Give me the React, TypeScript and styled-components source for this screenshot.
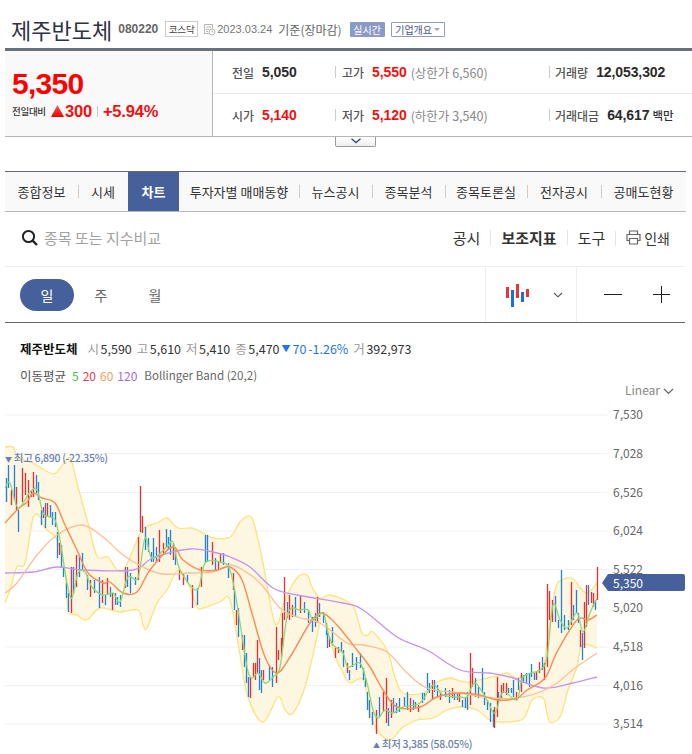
import React from 'react'
import styled, { createGlobalStyle } from 'styled-components'

const KR = `'Noto Sans CJK KR', 'Liberation Sans', sans-serif`
const NUM = `'Liberation Sans', 'Noto Sans CJK KR', sans-serif`
const NAVY = '#45609a'

const GlobalStyle = createGlobalStyle`
  html, body { margin: 0; padding: 0; background: #fff; overflow: hidden; }
  body { font-family: ${KR}; color: #333; }
`

type Pt = [number, number]

const upper: Pt[] = [[5,447],[13,447],[18,457],[33,463],[50,473],[57,472],[68,458],[72,463],[78,487],[88,523],[97,556],[108,557],[117,570],[125,568],[138,538],[145,527],[157,523],[167,518],[178,528],[192,528],[203,533],[213,538],[230,537],[240,522],[250,516],[255,527],[263,563],[273,617],[278,623],[285,600],[297,578],[307,575],[312,587],[320,598],[330,595],[348,602],[355,610],[362,633],[368,635],[373,632],[387,650],[395,677],[403,693],[423,693],[437,682],[450,678],[460,681],[470,682],[487,678],[497,676],[507,673],[517,678],[530,673],[543,667],[547,643],[555,590],[562,580],[573,579],[582,590],[588,593],[597,583]]
const lower: Pt[] = [[5,603],[10,590],[17,567],[25,563],[33,518],[40,517],[45,528],[57,540],[65,573],[68,610],[77,615],[87,620],[100,608],[120,612],[138,610],[143,625],[147,628],[157,603],[167,590],[178,570],[188,583],[197,607],[203,608],[220,602],[230,600],[240,655],[248,697],[263,722],[278,697],[285,710],[293,713],[305,687],[317,637],[323,613],[333,650],[343,673],[350,683],[363,680],[370,713],[377,730],[390,740],[403,727],[417,720],[433,718],[447,710],[460,707],[477,710],[490,720],[503,722],[523,719],[532,700],[543,698],[547,713],[550,722],[560,717],[568,690],[577,667],[582,645],[597,648]]
const ma5: Pt[] = [[5,488],[10,483],[18,508],[30,492],[37,490],[43,513],[50,517],[55,520],[60,540],[67,583],[72,598],[78,573],[85,572],[92,587],[103,595],[113,593],[120,602],[128,577],[138,578],[145,538],[152,558],[167,547],[173,542],[180,570],[197,590],[205,563],[220,562],[230,570],[238,610],[247,667],[252,678],[258,673],[265,683],[273,677],[280,667],[288,613],[300,610],[308,610],[313,620],[323,613],[328,633],[333,645],[343,653],[348,667],[360,663],[367,683],[373,710],[378,718],[385,710],[393,713],[403,707],[420,703],[433,685],[443,695],[460,697],[467,697],[475,683],[487,700],[495,713],[503,692],[517,700],[523,677],[540,670],[547,657],[553,605],[560,620],[567,628],[577,613],[583,632],[590,613],[597,598]]
const ma20: Pt[] = [[5,523],[17,510],[27,502],[33,493],[42,498],[55,503],[65,525],[77,550],[88,573],[103,583],[110,582],[123,593],[137,592],[150,570],[172,547],[183,560],[200,570],[217,570],[230,567],[242,580],[253,617],[265,657],[277,673],[290,657],[310,623],[322,613],[337,625],[357,650],[370,667],[383,690],[397,707],[420,707],[437,697],[460,693],[480,695],[497,700],[517,698],[527,690],[545,678],[557,652],[577,620],[588,620],[597,615]]
const ma60: Pt[] = [[5,593],[17,583],[37,555],[57,535],[82,525],[103,537],[123,555],[143,567],[163,574],[190,573],[213,572],[230,565],[243,570],[260,583],[280,608],[297,617],[320,623],[347,643],[363,645],[387,652],[407,673],[427,688],[460,693],[493,698],[517,698],[540,692],[557,683],[575,668],[597,653]]
const ma120: Pt[] = [[5,573],[33,572],[57,567],[83,570],[133,570],[153,558],[190,549],[217,553],[230,557],[250,567],[273,588],[297,595],[343,603],[363,610],[397,637],[427,650],[460,670],[490,673],[510,677],[543,688],[573,683],[597,677]]

// x, 고가 y, 저가 y
const redCandles: [number, number, number][] = [[11,490,505],[16,487,510],[22,468,502],[25,473,495],[28,480,507],[33,472,497],[43,507,518],[47,503,517],[59,543,555],[71,567,613],[76,555,587],[90,580,597],[102,580,603],[107,578,595],[112,593,610],[125,567,588],[138,537,580],[140,486,532],[142,516,533],[159,530,562],[163,543,553],[173,543,560],[179,570,580],[183,573,585],[192,585,608],[201,567,587],[212,542,565],[218,562,570],[220,553,563],[233,573,590],[236,610,625],[242,635,650],[250,677,698],[253,663,677],[255,663,680],[257,640,673],[263,670,680],[276,627,683],[278,650,660],[281,638,657],[282,613,647],[284,577,620],[289,595,620],[292,605,617],[300,596,613],[317,597,623],[329,637,647],[335,648,658],[338,647,653],[347,663,673],[376,710,734],[383,692,712],[386,678,723],[391,700,718],[410,698,712],[418,705,712],[432,680,700],[440,692,700],[452,688,698],[459,693,702],[470,653,705],[472,668,687],[494,707,728],[497,677,717],[501,685,698],[503,683,693],[506,683,695],[516,692,700],[521,673,692],[536,672,680],[539,662,673],[544,663,680],[547,584,667],[549,591,620],[552,600,622],[571,582,625],[580,630,647],[584,602,648],[586,585,627],[591,592,603],[593,593,607],[597,567,600]]
const blueCandles: [number, number, number][] = [[6,478,502],[8,465,488],[14,465,500],[18,510,532],[31,490,497],[36,475,493],[38,482,500],[41,510,525],[45,503,528],[50,505,518],[52,512,525],[55,512,527],[57,532,558],[61,545,568],[63,568,577],[66,583,598],[68,593,612],[73,567,593],[79,555,577],[82,553,570],[87,575,590],[94,580,593],[99,577,608],[105,595,605],[110,587,597],[115,593,605],[117,597,605],[120,595,607],[127,567,587],[130,573,593],[135,577,585],[145,527,550],[148,538,552],[151,552,562],[153,538,562],[156,547,563],[166,529,548],[168,537,550],[170,530,555],[175,550,565],[187,575,583],[197,588,605],[205,535,563],[207,535,562],[215,558,572],[223,553,565],[228,563,578],[234,590,610],[238,608,637],[244,635,667],[246,653,683],[248,677,697],[259,658,690],[261,670,693],[269,665,680],[272,667,687],[287,602,618],[295,597,617],[304,602,613],[308,610,623],[312,617,632],[315,613,627],[319,603,617],[323,612,623],[326,623,635],[327,633,648],[332,627,643],[341,642,652],[343,650,667],[349,670,680],[352,653,667],[356,657,670],[360,653,668],[363,668,680],[365,678,687],[367,692,710],[369,700,718],[372,712,725],[379,697,717],[388,708,726],[393,698,713],[396,703,713],[399,698,712],[404,697,707],[407,692,710],[413,700,710],[415,702,707],[422,693,703],[424,693,700],[427,673,690],[429,683,693],[434,680,692],[437,685,697],[445,688,697],[449,690,703],[454,692,700],[457,692,700],[462,700,707],[465,697,708],[467,692,710],[475,678,697],[478,687,698],[482,668,693],[484,692,705],[487,700,710],[490,703,722],[493,710,727],[498,692,702],[508,688,693],[511,688,693],[513,680,697],[518,678,690],[523,675,683],[526,673,683],[529,673,687],[531,664,677],[534,673,680],[542,657,670],[555,596,622],[558,620,628],[561,570,633],[564,615,630],[568,620,630],[573,605,620],[576,590,613],[578,613,623],[582,633,660],[588,585,605],[595,600,610]]

const gridYs = [415, 453.5, 492.5, 531, 569.5, 608, 647, 685.5, 724]
const axisLabels = ['7,530', '7,028', '6,526', '6,024', '5,522', '5,020', '4,518', '4,016', '3,514']

// 점 사이를 부드럽게 잇는다
const smooth = (pts: Pt[]): string => {
  let d = `M${pts[0][0]} ${pts[0][1]}`
  for (let i = 0; i < pts.length - 1; i++) {
    const p0 = pts[Math.max(i - 1, 0)]
    const p1 = pts[i]
    const p2 = pts[i + 1]
    const p3 = pts[Math.min(i + 2, pts.length - 1)]
    const c1x = p1[0] + (p2[0] - p0[0]) / 6
    const c1y = p1[1] + (p2[1] - p0[1]) / 6
    const c2x = p2[0] - (p3[0] - p1[0]) / 6
    const c2y = p2[1] - (p3[1] - p1[1]) / 6
    d += `C${c1x.toFixed(1)} ${c1y.toFixed(1)} ${c2x.toFixed(1)} ${c2y.toFixed(1)} ${p2[0]} ${p2[1]}`
  }
  return d
}

const bandArea = (): string => {
  const back = smooth([...lower].reverse()).replace(/^M/, 'L')
  return `${smooth(upper)}${back}Z`
}

const tabs = [
  { label: '종합정보', w: 73 },
  { label: '시세', w: 50, sep: true },
  { label: '차트', w: 51, active: true },
  { label: '투자자별 매매동향', w: 120 },
  { label: '뉴스공시', w: 73, sep: true },
  { label: '종목분석', w: 73, sep: true },
  { label: '종목토론실', w: 82, sep: true },
  { label: '전자공시', w: 74, sep: true },
  { label: '공매도현황', w: 85, sep: true },
]

function App(): JSX.Element {
  return (
    <Page>
      <GlobalStyle />
      <TitleRow>
        <Title>제주반도체</Title>
        <Code>080220</Code>
        <MarketBadge>코스닥</MarketBadge>
        <DateIcon viewBox="0 0 13 13">
          <path d="M1.5 1.5h8v4M1.5 1.5v9h4M3 4h5M3 6.5h3M3 8.5h2" fill="none" stroke="#b5b5b5" />
          <circle cx="9" cy="9" r="3" fill="none" stroke="#b5b5b5" />
          <path d="M9 7.5V9h1.5" fill="none" stroke="#b5b5b5" />
        </DateIcon>
        <DateText>2023.03.24</DateText>
        <BaseText>기준(장마감)</BaseText>
        <RealtimeBadge>실시간</RealtimeBadge>
        <CompanyBadge>
          기업개요
          <Caret />
        </CompanyBadge>
      </TitleRow>

      <Summary>
        <PricePanel>
          <BigPrice>5,350</BigPrice>
          <ChangeRow>
            <ChangeLabel>전일대비</ChangeLabel>
            <UpTriangle />
            <ChangeValue>300</ChangeValue>
            <ChangeSep />
            <ChangeValue>+5.94%</ChangeValue>
          </ChangeRow>
        </PricePanel>
        <StatGrid>
          <StatCell>
            <StatLabel>전일</StatLabel>
            <StatValue>5,050</StatValue>
          </StatCell>
          <StatCell $sep>
            <StatLabel>고가</StatLabel>
            <StatValue $red>5,550</StatValue>
            <StatLimit>(상한가 6,560)</StatLimit>
          </StatCell>
          <StatCell $sep $last>
            <StatLabel>거래량</StatLabel>
            <StatValue>12,053,302</StatValue>
          </StatCell>
          <StatCell $bottom>
            <StatLabel>시가</StatLabel>
            <StatValue $red>5,140</StatValue>
          </StatCell>
          <StatCell $sep $bottom>
            <StatLabel>저가</StatLabel>
            <StatValue $red>5,120</StatValue>
            <StatLimit>(하한가 3,540)</StatLimit>
          </StatCell>
          <StatCell $sep $bottom $last>
            <StatLabel>거래대금</StatLabel>
            <StatValue>64,617</StatValue>
            <StatUnit>백만</StatUnit>
          </StatCell>
        </StatGrid>
      </Summary>

      <CollapseRow>
        <CollapseButton>
          <svg width="12" height="6" viewBox="0 0 12 6">
            <path d="M1.5 .8L6 4.6 10.5 .8" fill="none" stroke="#3f4a66" strokeWidth="1.4" />
          </svg>
        </CollapseButton>
      </CollapseRow>

      <TabBar>
        {tabs.map((tab) => (
          <Tab key={tab.label} $w={tab.w} $active={tab.active} $sep={tab.sep}>
            {tab.label}
          </Tab>
        ))}
      </TabBar>

      <SearchRow>
        <SearchBox>
          <svg width="18" height="18" viewBox="0 0 18 18">
            <circle cx="7.5" cy="7.5" r="5.6" fill="none" stroke="#222" strokeWidth="2" />
            <path d="M11.6 11.6L16 16" stroke="#222" strokeWidth="2.4" />
          </svg>
          <Placeholder>종목 또는 지수비교</Placeholder>
        </SearchBox>
        <ToolMenu>
          <ToolItem>공시</ToolItem>
          <ToolItem $sep $bold>보조지표</ToolItem>
          <ToolItem $sep>도구</ToolItem>
          <ToolItem $sep $small>
            <svg width="15" height="15" viewBox="0 0 15 15">
              <path d="M3.5 4.5V1h8v3.5M3.5 10.5H1V4.5h13v6h-2.5M3.5 8.5h8V14h-8z" fill="none" stroke="#666" strokeWidth="1.2" />
            </svg>
            인쇄
          </ToolItem>
        </ToolMenu>
      </SearchRow>

      <PeriodRow>
        <PeriodGroup>
          <PeriodPill>일</PeriodPill>
          <PeriodItem>주</PeriodItem>
          <PeriodItem>월</PeriodItem>
        </PeriodGroup>
        <ChartTypeCell>
          <svg width="24" height="24" viewBox="0 0 24 24">
            <rect x="0" y="4" width="3" height="11" fill="#ee3338" />
            <rect x="5" y="7" width="3" height="17" fill="#1573e0" />
            <rect x="10" y="1" width="3" height="14" fill="#ee3338" />
            <rect x="15" y="9" width="3" height="10" fill="#1573e0" />
            <rect x="20" y="6" width="3" height="8" fill="#ee3338" />
          </svg>
          <svg width="10" height="6" viewBox="0 0 10 6">
            <path d="M1 1l4 3.8L9 1" fill="none" stroke="#555" strokeWidth="1.1" />
          </svg>
        </ChartTypeCell>
        <ZoomCell>
          <svg width="18" height="2" viewBox="0 0 18 2">
            <rect width="18" height="1" fill="#222" />
          </svg>
          <svg width="17" height="17" viewBox="0 0 17 17">
            <path d="M0 8.5h17M8.5 0v17" stroke="#222" strokeWidth="1" />
          </svg>
        </ZoomCell>
      </PeriodRow>

      <QuoteRow>
        <QuoteName>제주반도체</QuoteName>
        <QuoteKey $first>시</QuoteKey>
        <QuoteVal>5,590</QuoteVal>
        <QuoteKey>고</QuoteKey>
        <QuoteVal>5,610</QuoteVal>
        <QuoteKey>저</QuoteKey>
        <QuoteVal>5,410</QuoteVal>
        <QuoteKey>종</QuoteKey>
        <QuoteVal>5,470</QuoteVal>
        <QuoteDown>▼</QuoteDown>
        <QuoteDelta>70 -1.26%</QuoteDelta>
        <QuoteKey>거</QuoteKey>
        <QuoteVal>392,973</QuoteVal>
      </QuoteRow>

      <LegendRow>
        <LegendName>이동평균</LegendName>
        <LegendNum $c="#3bc43b">5</LegendNum>
        <LegendNum $c="#f5374a">20</LegendNum>
        <LegendNum $c="#f79a5c">60</LegendNum>
        <LegendNum $c="#a667f0">120</LegendNum>
        <LegendBand>Bollinger Band (20,2)</LegendBand>
      </LegendRow>

      <ChartBox viewBox="0 380 692 374" width="692" height="374">
        <ScaleText x="625" y="395">Linear</ScaleText>
        <path d="M664 389l4.5 4.5 4.5-4.5" fill="none" stroke="#666" strokeWidth="1.2" />

        {gridYs.map((y) => (
          <line key={y} x1="5" x2="607" y1={y} y2={y} stroke="#f1f1f1" />
        ))}
        {axisLabels.map((label, i) => (
          <AxisText key={label} x="613" y={gridYs[i] + 4}>{label}</AxisText>
        ))}

        <path d={bandArea()} fill="#fdf6e1" />
        <path d={smooth(upper)} fill="none" stroke="#ffe27a" strokeWidth="1.3" />
        <path d={smooth(lower)} fill="none" stroke="#ffe27a" strokeWidth="1.3" />

        {blueCandles.map(([x, y1, y2]) => (
          <line key={`b${x}`} x1={x + 0.5} x2={x + 0.5} y1={y1} y2={y2} stroke="#1e80e2" strokeWidth="1.3" />
        ))}
        {redCandles.map(([x, y1, y2]) => (
          <line key={`r${x}`} x1={x + 0.5} x2={x + 0.5} y1={y1} y2={y2} stroke="#f42a2a" strokeWidth="1.3" />
        ))}

        <path d={smooth(ma120)} fill="none" stroke="#c394f2" strokeWidth="1.3" />
        <path d={smooth(ma60)} fill="none" stroke="#ffbe93" strokeWidth="1.3" />
        <path d={smooth(ma20)} fill="none" stroke="#ff8a52" strokeWidth="1.4" />
        <path d={smooth(ma5)} fill="none" stroke="#84db78" strokeWidth="1.3" />

        <MarkText x="5" y="462"><MarkArrow>▼</MarkArrow> 최고 6,890 (-22.35%)</MarkText>
        <MarkText x="373" y="748"><MarkArrow>▲</MarkArrow> 최저 3,385 (58.05%)</MarkText>

        <path d="M602 583l6-9h75q2 0 2 2v13q0 2-2 2h-75z" fill={NAVY} />
        <TagText x="613" y="588">5,350</TagText>
      </ChartBox>
    </Page>
  )
}

const Page = styled.div`
  width: 692px;
  height: 754px;
  overflow: hidden;
  padding-left: 5px;
  box-sizing: border-box;
`

const TitleRow = styled.div`
  height: 48px;
  display: flex;
  align-items: center;
  padding: 10px 0 0 6px;
  box-sizing: border-box;
`

const Title = styled.h1`
  margin: 0;
  font: 400 22px/30px ${KR};
  color: #2d3142;
`

const Code = styled.span`
  margin-left: 6px;
  font: 700 12px ${NUM};
  color: #666;
`

const MarketBadge = styled.span`
  margin-left: 7px;
  width: 33px;
  height: 16px;
  box-sizing: border-box;
  border: 1px solid #ccc;
  font: 400 9.5px/14px ${KR};
  color: #444;
  text-align: center;
`

const DateIcon = styled.svg`
  margin-left: 5px;
  width: 13px;
  height: 13px;
`

const DateText = styled.span`
  margin-left: 1px;
  font: 400 11px ${NUM};
  color: #777;
`

const BaseText = styled.span`
  margin-left: 6px;
  font: 400 12px ${KR};
  color: #666;
`

const RealtimeBadge = styled.span`
  margin-left: 8px;
  width: 35px;
  height: 15px;
  background: #8b9bc6;
  border-radius: 1px;
  font: 400 10px/15px ${KR};
  color: #fff;
  text-align: center;
`

const CompanyBadge = styled.span`
  margin-left: 6px;
  width: 54px;
  height: 15px;
  box-sizing: border-box;
  border: 1px solid #8b9bc6;
  border-radius: 1px;
  font: 400 10px/13px ${KR};
  color: #44558c;
  display: flex;
  align-items: center;
  justify-content: center;
  gap: 2px;
`

const Caret = styled.i`
  width: 0;
  height: 0;
  border-left: 3px solid transparent;
  border-right: 3px solid transparent;
  border-top: 3px solid #9aa6c6;
`

const Summary = styled.section`
  display: flex;
  height: 89px;
  box-sizing: border-box;
  border-top: 3px solid #69717f;
  border-bottom: 1px solid #b5b5b5;
`

const PricePanel = styled.div`
  width: 208px;
  box-sizing: border-box;
  background: #f9f9f9;
  border-right: 1px solid #b5b5b5;
  padding: 18px 0 0 7px;
`

const BigPrice = styled.div`
  font: 700 30px/30px ${NUM};
  letter-spacing: -0.7px;
  color: #f00;
`

const ChangeRow = styled.div`
  display: flex;
  align-items: center;
  height: 20px;
  margin-top: 2px;
`

const ChangeLabel = styled.span`
  font: 500 9.5px ${KR};
  letter-spacing: -0.3px;
  color: #333;
  width: 39px;
`

const UpTriangle = styled.i`
  width: 13px;
  height: 12px;
  clip-path: polygon(50% 0, 100% 100%, 0 100%);
  background: linear-gradient(#f55, #e00);
  margin-right: 1px;
`

const ChangeValue = styled.span`
  font: 700 16.5px ${NUM};
  letter-spacing: -0.2px;
  color: #f21010;
`

const ChangeSep = styled.i`
  width: 1px;
  height: 11px;
  background: #ccc;
  margin: 0 5px 0 5px;
`

const StatGrid = styled.div`
  flex: 1;
  display: grid;
  grid-template-columns: 122px 214px 1fr;
  grid-template-rows: 42px 43px;
`

const StatCell = styled.div<{ $sep?: boolean; $bottom?: boolean; $last?: boolean }>`
  display: flex;
  align-items: center;
  position: relative;
  padding-left: ${(p) => (p.$last ? 6 : p.$sep ? 7 : 19)}px;
  border-top: ${(p) => (p.$bottom ? '1px solid #e8e8e8' : 'none')};
  &::before {
    content: ${(p) => (p.$sep ? "''" : 'none')};
    position: absolute;
    left: 0;
    top: 15px;
    width: 1px;
    height: 12px;
    background: #ccc;
  }
`

const StatLabel = styled.span`
  font: 500 12px ${KR};
  color: #555;
  margin-right: 8px;
`

const StatValue = styled.span<{ $red?: boolean }>`
  font: 700 14px ${NUM};
  letter-spacing: -0.1px;
  color: ${(p) => (p.$red ? '#f01010' : '#2b2b2b')};
`

const StatLimit = styled.span`
  margin-left: 4px;
  font: 400 12.5px ${KR};
  color: #888;
`

const StatUnit = styled.span`
  margin-left: 3px;
  font: 500 11.5px ${KR};
  color: #333;
`

const CollapseRow = styled.div`
  height: 34px;
`

const CollapseButton = styled.div`
  margin-left: 330px;
  width: 41px;
  height: 10px;
  box-sizing: border-box;
  border: 1px solid #999;
  border-top: none;
  border-radius: 0 0 2px 2px;
  background: linear-gradient(#fff, #eee);
  display: flex;
  justify-content: center;
  align-items: flex-start;
  padding-top: 1px;
`

const TabBar = styled.nav`
  display: flex;
  width: 681px;
  height: 41px;
  box-sizing: border-box;
  background: #f9f9f9;
  border-top: 1px solid #636a74;
  border-bottom: 1px solid #b9b9b9;
`

const Tab = styled.a<{ $w: number; $active?: boolean; $sep?: boolean }>`
  width: ${(p) => p.$w}px;
  position: relative;
  display: flex;
  align-items: center;
  justify-content: center;
  font: ${(p) => (p.$active ? 700 : 400)} 13px ${KR};
  color: ${(p) => (p.$active ? '#fff' : '#333')};
  background: ${(p) => (p.$active ? NAVY : 'transparent')};
  &::before {
    content: ${(p) => (p.$sep ? "''" : 'none')};
    position: absolute;
    left: 0;
    top: 13px;
    width: 1px;
    height: 13px;
    background: #ccc;
  }
`

const SearchRow = styled.div`
  width: 680px;
  height: 55px;
  box-sizing: border-box;
  border-bottom: 1px solid #eee;
  display: flex;
  align-items: center;
  justify-content: space-between;
  padding: 0 15px 3px 16px;
`

const SearchBox = styled.div`
  display: flex;
  align-items: center;
  gap: 5px;
`

const Placeholder = styled.span`
  font: 400 15px ${KR};
  color: #a2a2a2;
`

const ToolMenu = styled.div`
  display: flex;
  align-items: center;
`

const ToolItem = styled.span<{ $sep?: boolean; $bold?: boolean; $small?: boolean }>`
  position: relative;
  display: flex;
  align-items: center;
  gap: 3px;
  margin-left: ${(p) => (p.$sep ? 21 : 0)}px;
  font: ${(p) => (p.$bold ? 700 : 400)} ${(p) => (p.$small ? 14 : 15)}px ${KR};
  color: #333;
  &::before {
    content: ${(p) => (p.$sep ? "''" : 'none')};
    position: absolute;
    left: -11px;
    top: 3px;
    width: 1px;
    height: 15px;
    background: #e4e4e4;
  }
`

const PeriodRow = styled.div`
  width: 680px;
  height: 56px;
  box-sizing: border-box;
  border-bottom: 1px solid #666b73;
  display: flex;
  align-items: stretch;
`

const PeriodGroup = styled.div`
  flex: 1;
  display: flex;
  align-items: center;
  padding-left: 15px;
`

const PeriodPill = styled.span`
  width: 54px;
  height: 32px;
  border-radius: 16px;
  background: ${NAVY};
  color: #fff;
  font: 400 14px/32px ${KR};
  text-align: center;
`

const PeriodItem = styled.span`
  width: 54px;
  text-align: center;
  font: 400 14px ${KR};
  color: #666;
`

const ChartTypeCell = styled.div`
  width: 92px;
  box-sizing: border-box;
  border-left: 1px solid #eee;
  border-right: 1px solid #eee;
  display: flex;
  align-items: center;
  padding-left: 20px;
  gap: 23px;
`

const ZoomCell = styled.div`
  width: 108px;
  box-sizing: border-box;
  display: flex;
  align-items: center;
  padding-left: 27px;
  gap: 31px;
`

const QuoteRow = styled.div`
  height: 40px;
  display: flex;
  align-items: center;
  padding: 10px 0 0 15px;
  box-sizing: border-box;
  font: 400 12.5px ${KR};
  color: #333;
`

const QuoteName = styled.strong`
  font: 700 12.5px ${KR};
  color: #111;
`

const QuoteKey = styled.span<{ $first?: boolean }>`
  margin-left: ${(p) => (p.$first ? 10 : 5)}px;
  color: #999;
  margin-right: 1.5px;
`

const QuoteVal = styled.span`
  color: #333;
`

const QuoteDown = styled.span`
  margin-left: 2px;
  font-size: 9px;
  color: #1e78e0;
`

const QuoteDelta = styled.span`
  margin-left: 2px;
  word-spacing: -1px;
  color: #1e78e0;
`

const LegendRow = styled.div`
  height: 17px;
  display: flex;
  align-items: center;
  padding: 7px 0 0 15px;
  box-sizing: border-box;
  font: 400 12px ${KR};
  color: #555;
`

const LegendName = styled.span`
  font-size: 12.5px;
  margin-right: 6px;
`

const LegendNum = styled.span<{ $c: string }>`
  color: ${(p) => p.$c};
  margin-right: 4px;
`

const LegendBand = styled.span`
  margin-left: 3px;
  font-size: 11.6px;
  color: #666;
`

const ChartBox = styled.svg`
  display: block;
  margin-left: -5px;
`

const ScaleText = styled.text`
  font: 400 12px ${KR};
  fill: #888;
`

const AxisText = styled.text`
  font: 400 12px ${KR};
  fill: #666;
`

const MarkText = styled.text`
  font: 500 10.5px ${KR};
  letter-spacing: -0.3px;
  fill: #6a80b4;
`

const MarkArrow = styled.tspan`
  font-size: 7px;
`

const TagText = styled.text`
  font: 400 12px ${KR};
  fill: #fff;
`

export default App
